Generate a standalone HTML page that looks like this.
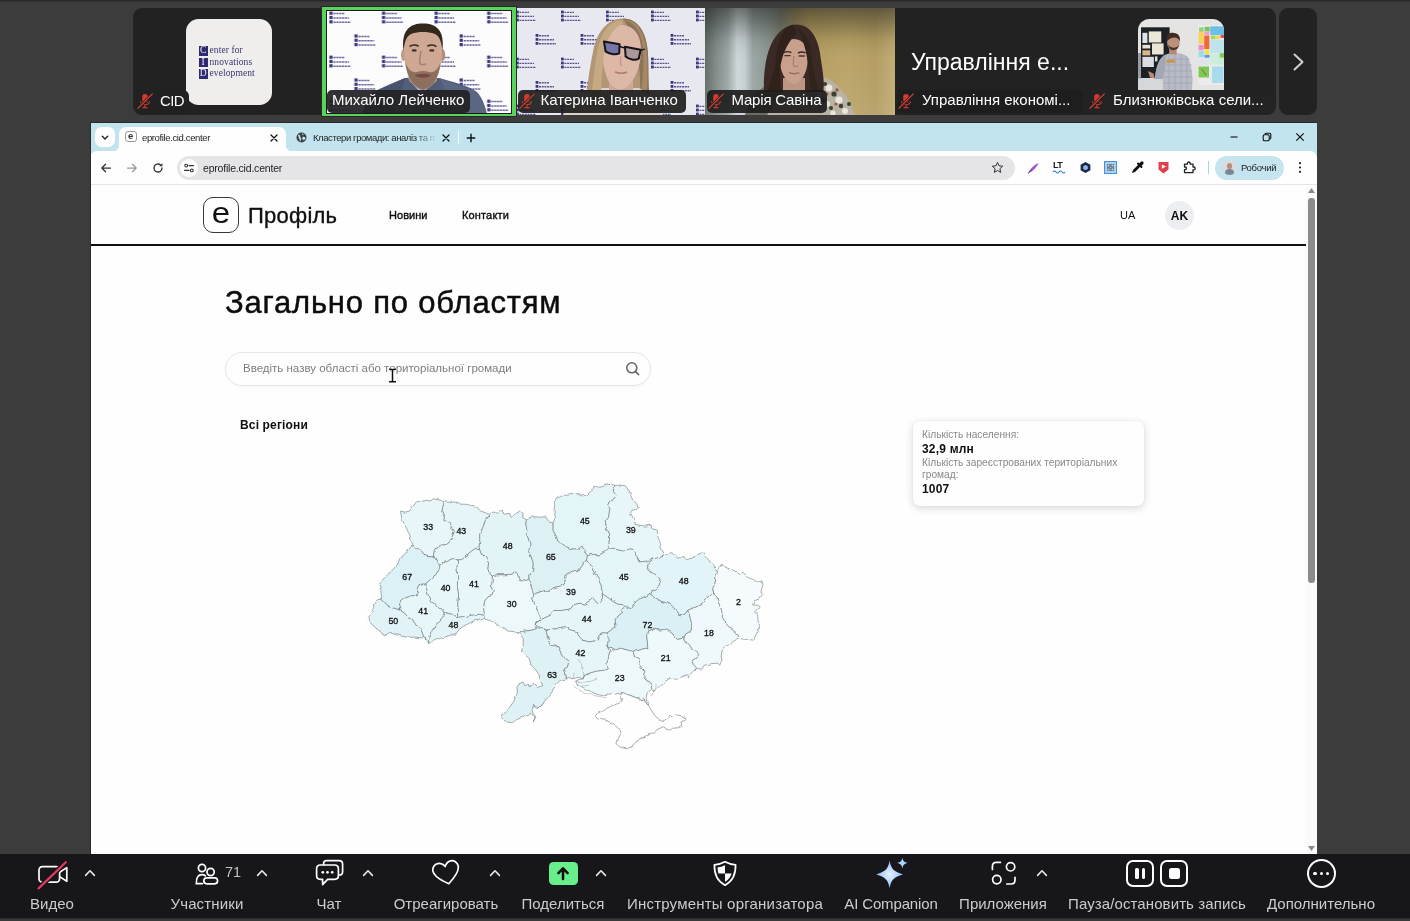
<!DOCTYPE html>
<html><head><meta charset="utf-8">
<style>
*{box-sizing:border-box;margin:0;padding:0}
html,body{width:1410px;height:921px;overflow:hidden}
body{background:#3c3c3c;font-family:"Liberation Sans",sans-serif;position:relative;color:#fff}
.abs{position:absolute}
#topline{left:0;top:0;width:1410px;height:2px;background:linear-gradient(#262626,#2e2e2e 55%,#3c3c3c)}
/* tiles */
.tile{position:absolute;top:8px;height:107px;background:#232323;overflow:hidden}
.lbl{position:absolute;left:2px;bottom:2px;height:21px;background:rgba(30,30,30,.92);border-radius:5px;color:#fff;font-size:15px;line-height:21px;padding:0 7px 0 25px;white-space:nowrap}
.lbl.nomic{padding-left:6px}
.lbl svg{position:absolute;left:1px;top:2px}
.cb{display:inline-block;width:9.5px;height:9.5px;line-height:9.5px;background:#2f2a72;color:#f0efed;font-weight:400;text-align:center;margin-right:1.5px;vertical-align:0}
/* browser */
#browser{left:90px;top:122px;width:1227px;height:732px;background:#fff;overflow:hidden;color:#000}
#tabstrip{left:0;top:0;width:1227px;height:40px;background:#c3e5f0}
#toolbar{left:0;top:29px;width:1227px;height:34px;background:#fff;border-bottom:1px solid #e6e6e6;border-radius:7px 7px 0 0}
#bleft{left:0;top:0;width:1px;height:732px;background:#2a2a2a;z-index:5}
#btop{left:0;top:0;width:1227px;height:1px;background:#2a2a2a;z-index:5}
#page{left:0;top:63px;width:1216px;height:669px;background:#fff}
/* bottom bar */
.bl{top:41px;text-align:center;font-size:15px;line-height:18px;color:#cdcdcd;white-space:nowrap}
#bbar{left:0;top:854px;width:1410px;height:67px;background:#18181c}
#bbar .it{position:absolute;top:0;height:67px;text-align:center;color:#d6d6d6;font-size:15px}
#bbar .it span{position:absolute;top:41px;left:50%;transform:translateX(-50%);white-space:nowrap;line-height:18px}
</style></head>
<body>
<div id="root" style="position:absolute;left:0;top:0;width:1410px;height:921px;will-change:transform;opacity:.9999">
<div id="topline" class="abs"></div>
<!-- TILES -->
<div id="tiles">
<svg width="0" height="0" style="position:absolute">
 <defs>
  <symbol id="mic" viewBox="0 0 16 16">
   <rect x="5.2" y="1" width="5.6" height="8.6" rx="2.8" fill="#d63a2f"/>
   <path d="M3.6 8.2 C3.9 13 12.1 13 12.4 8.2" stroke="#d63a2f" stroke-width="1.1" fill="none"/>
   <path d="M8 12 V14.4 M5.6 14.6 H10.4" stroke="#d63a2f" stroke-width="1.1" fill="none"/>
   <path d="M1 15.4 L15.4 0.8" stroke="#232323" stroke-width="2.6"/>
   <path d="M0.6 15.6 L15.6 0.6" stroke="#e0443a" stroke-width="1.1"/>
  </symbol>
  <pattern id="cidpat" width="52.6" height="44" patternUnits="userSpaceOnUse">
    <g fill="#2f2a72">
     <rect x="2.4" y="0.6" width="3.2" height="3.2"/><rect x="2.4" y="4.9" width="3.2" height="3.2"/><rect x="2.4" y="9.2" width="3.2" height="3.2"/>
     <rect x="27.4" y="23.4" width="3.2" height="3.2"/><rect x="27.4" y="27.7" width="3.2" height="3.2"/><rect x="27.4" y="32" width="3.2" height="3.2"/>
    </g>
    <g stroke="#56508f" stroke-width="1.5" stroke-dasharray="2.2 .7" fill="none">
     <path d="M6.4 2.6 H18 M6.4 6.9 H22 M6.4 11.2 H23.4"/>
     <path d="M31.4 25.4 H43 M31.4 29.7 H47 M31.4 34 H48.4"/>
    </g>
  </pattern>
  <pattern id="cidpat3" width="45" height="47" patternUnits="userSpaceOnUse">
    <g fill="#2f2a72">
     <rect x="-1" y="2.6" width="2.8" height="2.8"/><rect x="-1" y="6.6" width="2.8" height="2.8"/><rect x="-1" y="10.6" width="2.8" height="2.8"/>
     <rect x="44" y="2.6" width="2.8" height="2.8"/><rect x="44" y="6.6" width="2.8" height="2.8"/><rect x="44" y="10.6" width="2.8" height="2.8"/>
     <rect x="18.6" y="26" width="2.8" height="2.8"/><rect x="18.6" y="30" width="2.8" height="2.8"/><rect x="18.6" y="34" width="2.8" height="2.8"/>
    </g>
    <g stroke="#4d4788" stroke-width="1.4" stroke-dasharray="2 .7" fill="none">
     <path d="M2.4 4.4 H12 M2.4 8.4 H17 M2.4 12.4 H19"/>
     <path d="M22 27.8 H32 M22 31.8 H37 M22 35.8 H39"/>
    </g>
  </pattern>
  <filter id="bl1" x="-10%" y="-10%" width="120%" height="120%"><feGaussianBlur stdDeviation=".55"/></filter>
  <filter id="bl2" x="-10%" y="-10%" width="120%" height="120%"><feGaussianBlur stdDeviation="1.1"/></filter>
  <filter id="bl4" x="-10%" y="-10%" width="120%" height="120%"><feGaussianBlur stdDeviation="3.5"/></filter>
 </defs>
</svg>

<!-- tile 1 : CID -->
<div class="tile" style="left:133px;width:189px;border-radius:9px 0 0 9px">
  <div class="abs" style="left:52.5px;top:11px;width:86px;height:86px;border-radius:12.5px;background:#f0efed;letter-spacing:.1px;color:#3b3577;font-family:'Liberation Serif',serif;font-size:9.5px;line-height:11.7px">
    <div class="abs" style="left:13px;top:26px;white-space:nowrap">
      <div><b class="cb">C</b>enter for</div><div><b class="cb">I</b>nnovations</div><div><b class="cb">D</b>evelopment</div>
    </div>
  </div>
  <div class="lbl" style="left:3px;bottom:0;height:25px;line-height:21px;border-radius:6px;background:#222;letter-spacing:-.6px;padding:0 5px 0 24px"><svg width="16" height="16" style="top:3px"><use href="#mic"/></svg>CID</div>
</div>

<!-- tile 2 : active speaker -->
<div class="abs" style="left:321px;top:6px;width:196px;height:111px;background:#5bd45d;border:1px solid #2a2a2a"></div>
<div class="abs" style="left:326px;top:10px;width:186px;height:104px;background:#1c1c1c"></div>
<div class="abs" style="left:327px;top:11px;width:184px;height:102px;background:#fdfdfe;overflow:hidden">
  <svg width="184" height="102" viewBox="0 0 184 102" class="abs" style="left:0;top:0">
    <rect width="184" height="102" fill="#fdfdfe"/>
    <rect width="184" height="102" fill="url(#cidpat)" filter="url(#bl1)" opacity=".92"/>
    <g filter="url(#bl1)">
    <!-- jacket -->
    <path d="M44 82 C56 76 68 71 78 67 L112 67 C126 71 142 75 150 81 C156 88 158 96 160 104 L34 104 Z" fill="#525e7a"/>
    <path d="M78 67 L72 86 L60 104 L44 104 L50 80 Z" fill="#49546e"/>
    <path d="M112 67 L122 86 L134 104 L160 104 C158 94 154 84 148 80 Z" fill="#5b6783"/>
    <path d="M80 66 L95 84 L110 66 Z" fill="#9fb4dc"/>
    <!-- neck -->
    <path d="M82 56 H110 V70 L96 80 L82 70 Z" fill="#b18a77"/>
    <!-- ears -->
    <ellipse cx="76.6" cy="44" rx="2.6" ry="6" fill="#c49a86"/><ellipse cx="115.6" cy="44" rx="2.6" ry="6" fill="#b88d78"/>
    <!-- head -->
    <path d="M77 40 C76 22 84 15 96 15 C108 15 116 22 115 40 C115 56 110 70 104 75 C100 78.6 92 78.6 88 75 C82 70 77 56 77 40 Z" fill="#d0a995"/>
    <!-- hair -->
    <path d="M76.6 40 C74 20 82 12.4 96 12.4 C110 12.4 118 20 115.4 40 C114.6 30 112 25 108 23 C100 20.4 92 20.4 84 23 C80 25 77.4 30 76.6 40 Z" fill="#33291f"/>
    <!-- beard -->
    <path d="M78.6 52 C80 66 86 77 96 78.4 C106 77 112 66 113.4 52 C110 60 106 62 102 61 C98 59.6 94 59.6 90 61 C86 62 82 60 78.6 52 Z" fill="#8e6f5f"/>
    <path d="M88 64 C92 62.6 100 62.6 104 64 C102 67.6 90 67.6 88 64 Z" fill="#7a4a44"/>
    <!-- eyes/brows -->
    <path d="M82.6 35.6 C85 33.8 89 33.8 91.6 35.2 M100.4 35.2 C103 33.8 107 33.8 109.4 35.6" stroke="#3a2a20" stroke-width="1.7" fill="none"/>
    <ellipse cx="87.2" cy="39.4" rx="2.6" ry="1.2" fill="#3e2e28"/><ellipse cx="104.8" cy="39.4" rx="2.6" ry="1.2" fill="#3e2e28"/>
    <path d="M94 40 C93 46 92 50 93 52.6 C95 54 97 54 99 52.6" stroke="#a87f6c" stroke-width="1.4" fill="none"/>
    </g>
  </svg>
  <div class="lbl nomic" style="left:0px;bottom:0px;height:23px;line-height:20px;border-radius:5px;background:rgba(35,35,38,.93);padding:0 6px 0 5px">Михайло Лейченко</div>
</div>

<!-- tile 3 -->
<div class="tile" style="left:517px;width:188px;background:#e7e8f0">
  <svg width="188" height="107" viewBox="0 0 188 107" class="abs" style="left:0;top:0">
    <rect width="188" height="107" fill="#e8e9f1"/>
    <rect width="188" height="107" fill="url(#cidpat3)" filter="url(#bl1)" opacity=".92"/>
    <g filter="url(#bl1)">
    <!-- hair back -->
    <path d="M66 107 C70 84 72 62 76 44 C80 22 92 10.6 106 10.6 C122 10.6 130 26 131 46 C132 66 130 86 136 107 Z" fill="#b39877"/>
    <path d="M106 10.6 C122 10.6 130 26 131 46 C132 66 130 86 136 107 L122 107 C124 80 126 40 106 10.6 Z" fill="#8e7458"/>
    <!-- shoulders -->
    <path d="M46 107 C54 92 68 84 84 80 L122 80 C130 84 140 92 146 107 Z" fill="#ddd2cf"/>
    <!-- neck -->
    <path d="M92 70 H116 V84 H92 Z" fill="#cfa896"/>
    <!-- face -->
    <path d="M85 40 C84 24 94 17 104 17 C116 17 124 26 124 42 C124 58 118 74 108 80 C102 83 96 80 92 74 C88 66 85 54 85 40 Z" fill="#deb9a7"/>
    <!-- hair front -->
    <path d="M104 12 C92 14 84 24 80 44 C77 62 76 82 72 100 L84 92 C85 70 85 44 92 30 C96 22 100 18 106 16 Z" fill="#c6aa84"/>
    <path d="M104 12 C114 12 124 20 126 40 C127 56 126 72 124 84 L130 84 C131 60 132 30 120 17 C116 13 110 11 104 12 Z" fill="#a58a69"/>
    <!-- glasses -->
    <path d="M87 33.6 L102.6 36.2 L102.2 45.4 C98 47 92 46 88.6 43.4 Z" fill="#5a66a8" fill-opacity=".8" stroke="#15151a" stroke-width="2" stroke-linejoin="round"/>
    <path d="M108 38.8 L123.6 41.8 L121.8 50.6 C118 52.6 112 51.6 108.6 48.6 Z" fill="#9c8f98" fill-opacity=".75" stroke="#15151a" stroke-width="2" stroke-linejoin="round"/>
    <path d="M102.6 38.6 L108 40" stroke="#15151a" stroke-width="1.5"/>
    <path d="M123.6 42.4 L128 41" stroke="#15151a" stroke-width="1.3"/>
    <path d="M98 64 C102 65.4 107 65.4 110 64" stroke="#b07c72" stroke-width="1.6" fill="none"/>
    <path d="M104 48 C103 54 103 56 105 58" stroke="#c39a88" stroke-width="1.3" fill="none"/>
    </g>
  </svg>
  <div class="lbl" style="left:1px;bottom:2px;height:23px;line-height:20px;border-radius:5px;width:168px;padding-left:22.5px"><svg width="16" height="16" style="top:3px"><use href="#mic"/></svg>Катерина Іванченко</div>
</div>

<!-- tile 4 -->
<div class="tile" style="left:705px;width:190px;background:#a79a70">
  <svg width="190" height="107" viewBox="0 0 190 107" class="abs" style="left:0;top:0">
    <defs>
     <linearGradient id="t4h" x1="0" y1="0" x2="1" y2="0">
      <stop offset="0" stop-color="#5f6862"/><stop offset=".06" stop-color="#7f8a86"/><stop offset=".12" stop-color="#98a5a4"/><stop offset=".17" stop-color="#cdd6d8"/><stop offset=".21" stop-color="#c3cdd0"/><stop offset=".25" stop-color="#99a5a4"/><stop offset=".33" stop-color="#8b9690"/><stop offset=".4" stop-color="#7c8174"/><stop offset=".47" stop-color="#9a8b5c"/><stop offset=".55" stop-color="#b39b5e"/><stop offset=".75" stop-color="#b9a265"/><stop offset=".9" stop-color="#b29b60"/><stop offset="1" stop-color="#c0aa70"/>
     </linearGradient>
     <linearGradient id="t4v" x1="0" y1="0" x2="0" y2="1"><stop offset="0" stop-color="#1e201c" stop-opacity=".55"/><stop offset=".28" stop-color="#1e201c" stop-opacity=".1"/><stop offset=".5" stop-color="#fff" stop-opacity=".04"/><stop offset="1" stop-color="#fff" stop-opacity=".1"/></linearGradient>
    </defs>
    <rect width="190" height="107" fill="url(#t4h)"/>
    <rect width="190" height="107" fill="url(#t4v)"/>
    <g filter="url(#bl1)">
    <!-- blouse -->
    <path d="M40 107 C46 86 58 76 74 72 L116 68 C134 74 144 90 150 107 Z" fill="#b9b4a6"/>
    <path d="M40 107 C46 86 58 76 74 72 L80 82 L62 107Z" fill="#6f6e64"/>
    <g fill="#ece7dc"><circle cx="124" cy="80" r="3.4"/><circle cx="134" cy="92" r="3.6"/><circle cx="122" cy="96" r="3"/><circle cx="140" cy="103" r="3"/><circle cx="128" cy="105" r="2.6"/><circle cx="114" cy="86" r="2.4"/></g>
    <g fill="#3d4136"><circle cx="129" cy="86" r="2.6"/><circle cx="118" cy="92" r="2.4"/><circle cx="136" cy="98" r="2.2"/><circle cx="126" cy="100" r="2"/><circle cx="120" cy="76" r="2"/><circle cx="144" cy="96" r="2"/></g>
    <g fill="#a45a40"><circle cx="132" cy="82" r="1.8"/><circle cx="116" cy="98" r="1.8"/><circle cx="131" cy="96" r="1.6"/><circle cx="122" cy="86" r="1.5"/></g>
    <!-- hair -->
    <path d="M59 84 C58 52 65 24 86 17 C105 13 114 30 116 52 C118 66 120 76 118 84 Z" fill="#3a2c26"/>
    <!-- neck -->
    <path d="M78 70 H100 V86 H78 Z" fill="#bd9783"/>
    <!-- face -->
    <path d="M75 44 C77 28 98 26 102 42 C105 58 99 74 89 76.6 C79 74 73 60 75 44 Z" fill="#c9a18d"/>
    <path d="M88 16.6 C74 22 72 40 70 60 C66 72 64 78 62 84 L76 82 C73 64 75 42 92 25 Z" fill="#30241e"/>
    <path d="M92 20 C102 24 106 36 107 50 C108 62 110 74 116 84 L106 84 C104 70 104 40 92 20Z" fill="#33261f"/>
    <path d="M78.6 44.6 C81 43.4 84 43.4 86.4 44.6 M93 45 C95.4 43.8 98.4 43.8 100.6 45" stroke="#3a2a24" stroke-width="1.4" fill="none"/>
    <path d="M79.4 47.6 H85.6 M93.8 48 H99.8" stroke="#4a342c" stroke-width="1.3"/>
    <path d="M89 48 C88 54 87.6 56 89 58 C90.4 58.8 92 58.6 93 58" stroke="#a97f6c" stroke-width="1.2" fill="none"/>
    <path d="M84 64.6 C87 65.8 91.4 65.8 94.4 64.6" stroke="#9c6a60" stroke-width="1.5" fill="none"/>
    </g>
  </svg>
  <div class="lbl" style="left:2px;bottom:2px;height:23px;line-height:20px;border-radius:5px;letter-spacing:-.2px;padding:0 5.5px 0 24.5px"><svg width="16" height="16" style="top:3px"><use href="#mic"/></svg>Марія Савіна</div>
</div>

<!-- tile 5 -->
<div class="tile" style="left:895px;width:191px">
  <div class="abs" style="left:16px;top:39px;font-size:23px;line-height:30px;color:#fff;white-space:nowrap">Управління е...</div>
  <div class="lbl" style="left:2px;bottom:2px;height:23px;line-height:20px;border-radius:5px;background:#1f1f1f;width:186px"><svg width="16" height="16" style="top:3px"><use href="#mic"/></svg>Управління економі...</div>
</div>

<!-- tile 6 -->
<div class="tile" style="left:1086px;width:190px;border-radius:0 9px 9px 0">
  <svg width="86" height="72" viewBox="0 0 86 72" class="abs" style="left:52px;top:11px;border-radius:11.5px 11.5px 0 0">
    <rect width="86" height="72" fill="#e5e5e3"/>
    <g filter="url(#bl1)">
    <rect x="0" y="34" width="3.4" height="38" fill="#9a9fa4"/>
    <rect x="0" y="59.5" width="26" height="13" fill="#d6d8d9"/>
    <rect x="3" y="8.3" width="28.6" height="50.7" fill="#1e2126"/>
    <rect x="4.4" y="13.8" width="5" height="10.2" fill="#dfe3ea"/><rect x="10.8" y="12.4" width="12.5" height="11.1" fill="#ece8da"/>
    <rect x="4.4" y="25.8" width="7.8" height="3.7" fill="#e8e3d4"/><rect x="14" y="24.4" width="11.6" height="11.1" fill="#ebe6d6"/>
    <rect x="4.4" y="31.3" width="7.8" height="5.1" fill="#d8b988"/><rect x="4.4" y="37.8" width="11.5" height="10.2" fill="#dcdde3"/>
    <rect x="17" y="37.4" width="2.4" height="5" fill="#e6e6e6"/>
    <!-- notes -->
    <rect x="60.2" y="6" width="26" height="60" fill="#ececee"/>
    <rect x="61.1" y="8.3" width="4.6" height="4.6" fill="#9bd37a"/><rect x="66.6" y="7.8" width="5.1" height="4.6" fill="#7fc65a"/>
    <rect x="72.2" y="7.3" width="13.8" height="8.8" fill="#6cc0ea"/>
    <rect x="60.6" y="12.9" width="5.6" height="12" fill="#f3d560"/><rect x="66.4" y="12.6" width="5" height="4.4" fill="#f0a0c8"/>
    <rect x="66.2" y="17" width="5.2" height="13" fill="#ee6a3a"/>
    <rect x="72.9" y="16.6" width="4.5" height="3.7" fill="#a6d860"/><rect x="77.4" y="16.6" width="4.4" height="3.7" fill="#eed95a"/><rect x="82.6" y="16" width="3.4" height="3" fill="#e8553a"/>
    <rect x="72.2" y="20.7" width="13.8" height="13.4" fill="#bfe4ee"/>
    <rect x="60.6" y="25.8" width="5.1" height="5.5" fill="#ef8fc0"/><rect x="60.6" y="31.8" width="5.6" height="6.5" fill="#9edaea"/>
    <rect x="66.6" y="30.4" width="4.8" height="5.1" fill="#f4e04a"/><rect x="66.6" y="35.9" width="5" height="2.8" fill="#5a9be0"/>
    <rect x="72.2" y="34.6" width="13.8" height="11" fill="#cdeedd"/><rect x="81.8" y="34.1" width="4.2" height="4.6" fill="#86c95a"/>
    <rect x="60.2" y="39.2" width="11.5" height="7.3" fill="#e2e4ec"/>
    <rect x="60.6" y="47.5" width="10.4" height="11" fill="#7ecb52"/><path d="M63.6 50 L68 56" stroke="#b0563a" stroke-width="1"/>
    <rect x="74" y="47.5" width="11.4" height="16.5" fill="#a9dcee"/>
    <!-- man -->
    <path d="M16.8 60 C18 48 21 38 28 35.4 L36 33 L46 35.4 C52 38 53.6 48 54.6 60 L54 72 L25 72 L24.6 58 Z" fill="#b9bcc6"/>
    <path d="M16.8 60 C18 48 21 38 28 35.4 L27 50 L24.6 60 Z" fill="#a4a8b4"/>
    <path d="M30 40 h22 M28 46 h26 M26 52 h28 M25 58 h29 M25 64 h29 M31 36 v36 M37 34 v38 M43 35 v37 M49 37 v35" stroke="#8f94a6" stroke-width=".7" opacity=".6"/>
    <rect x="31.6" y="29" width="7" height="6.4" fill="#b58b74"/>
    <ellipse cx="35.4" cy="23.4" rx="6.3" ry="8.4" fill="#bd927b"/>
    <path d="M28.8 22 C27.8 14.6 32 13.6 36 13.9 C40.4 14.2 42.6 17.4 41.8 22.4 C40.4 18.2 35 16.6 28.8 22 Z" fill="#3f2e24"/>
    <path d="M30 25.4 C31 32.6 39.4 33.4 41 26 C39 29.4 33 29.8 30 25.4 Z" fill="#4a3428"/>
    <rect x="28.3" y="40.6" width="8.8" height="3.2" fill="#c99a4a"/>
    <path d="M9.9 52 l5.6 2.4 l1.3 5 l-4.8-1z" fill="#b98e78"/>
    </g>
  </svg>
  <div class="lbl" style="left:0px;bottom:0px;height:25px;line-height:20px;border-radius:5px;background:#242424;width:188px;padding-left:27px"><svg width="16" height="16" style="top:3px;left:3px"><use href="#mic"/></svg>Близнюківська сели...</div>
</div>

<!-- next arrow -->
<div class="tile" style="left:1279px;width:38px;border-radius:9px">
  <svg width="38" height="107" viewBox="0 0 38 107" class="abs" style="left:0;top:0"><path d="M15.5 46.5 L23.5 54 L15.5 61.5" stroke="#d2d2d2" stroke-width="2" fill="none" stroke-linecap="round" stroke-linejoin="round"/></svg>
</div>
</div>
<!-- BROWSER -->
<div id="browser" class="abs">
  <div id="tabstrip" class="abs">
<div class="abs" style="left:5px;top:5px;width:20px;height:20px;background:#fff;border-radius:6.5px"></div>
<svg class="abs" style="left:10px;top:12px" width="10" height="8" viewBox="0 0 10 8"><path d="M2.3 2.3 L5 5 L7.7 2.3" stroke="#222" stroke-width="1.4" fill="none" stroke-linecap="round" stroke-linejoin="round"/></svg>
<!-- active tab -->
<div class="abs" style="left:29px;top:5px;width:167px;height:24px;background:#fff;border-radius:7px 7px 0 0"></div>
<div class="abs" style="left:23px;top:23px;width:6px;height:6px;background:radial-gradient(circle at 0 0,transparent 6px,#fff 6.5px)"></div>
<div class="abs" style="left:196px;top:23px;width:6px;height:6px;background:radial-gradient(circle at 100% 0,transparent 6px,#fff 6.5px)"></div>
<div class="abs" style="left:35px;top:8.5px;width:11.5px;height:11.5px;border:1px solid #9a9a9a;border-radius:3px;background:#fff;font-size:9.5px;font-weight:700;line-height:8px;text-align:center;color:#333">e</div>
<div class="abs" style="left:52px;top:9px;font-size:9.5px;line-height:13px;letter-spacing:-.37px;color:#1f1f1f;white-space:nowrap">eprofile.cid.center</div>
<svg class="abs" style="left:180px;top:11.5px" width="8" height="8" viewBox="0 0 8 8"><path d="M1 1 L7 7 M7 1 L1 7" stroke="#111" stroke-width="1.3" stroke-linecap="round"/></svg>
<!-- tab 2 -->
<svg class="abs" style="left:206px;top:10px" width="11" height="11" viewBox="0 0 11 11"><circle cx="5.5" cy="5.5" r="5" fill="#3c4043"/><path d="M2 3.2 C3.5 2.6 4.4 3.6 4 4.6 C3.7 5.6 5 5.6 5 6.8 C5 7.8 4.2 8.2 4.2 9.4 M6.4 1.4 C6 2.6 7.2 3 7.8 2.6 M6.8 5.2 C7.8 4.8 9 5.4 9.4 6.2 C8.6 7.6 7.6 8.2 7 7.4 C6.6 6.8 6.2 5.8 6.8 5.2Z" fill="#c3e5f0" stroke="#c3e5f0" stroke-width=".5"/></svg>
<div class="abs" style="left:223px;top:9px;width:122px;overflow:hidden;font-size:9.5px;line-height:13px;letter-spacing:-.42px;color:#1f1f1f;white-space:nowrap">Кластери громади: аналіз та пі</div>
<div class="abs" style="left:325px;top:8px;width:22px;height:15px;background:linear-gradient(90deg,rgba(195,229,240,0),#c3e5f0)"></div>
<svg class="abs" style="left:351.5px;top:11.5px" width="8" height="8" viewBox="0 0 8 8"><path d="M1 1 L7 7 M7 1 L1 7" stroke="#111" stroke-width="1.3" stroke-linecap="round"/></svg>
<div class="abs" style="left:368px;top:9px;width:1px;height:13px;background:#f2fafc"></div>
<svg class="abs" style="left:376px;top:10.5px" width="10" height="10" viewBox="0 0 10 10"><path d="M5 1.2 V8.8 M1.2 5 H8.8" stroke="#111" stroke-width="1.4" stroke-linecap="round"/></svg>
<!-- window controls -->
<svg class="abs" style="left:1139px;top:10px" width="10" height="10" viewBox="0 0 10 10"><path d="M1.5 5 H8.5" stroke="#111" stroke-width="1.1"/></svg>
<svg class="abs" style="left:1172px;top:10px" width="10" height="10" viewBox="0 0 10 10"><rect x="1.2" y="2.8" width="6" height="6" rx="1.3" fill="none" stroke="#111" stroke-width="1.1"/><path d="M3 2.6 V2.2 Q3 1.2 4 1.2 H7.6 Q8.8 1.2 8.8 2.4 V6 Q8.8 7 7.8 7" fill="none" stroke="#111" stroke-width="1.1"/></svg>
<svg class="abs" style="left:1205px;top:10px" width="10" height="10" viewBox="0 0 10 10"><path d="M1.3 1.3 L8.7 8.7 M8.7 1.3 L1.3 8.7" stroke="#111" stroke-width="1.2"/></svg>
</div>
  <div id="toolbar" class="abs">
<svg class="abs" style="left:10px;top:11px" width="12" height="12" viewBox="0 0 12 12"><path d="M10.5 6 H1.8 M5.6 2.2 L1.8 6 L5.6 9.8" stroke="#333" stroke-width="1.25" fill="none" stroke-linecap="round" stroke-linejoin="round"/></svg>
<svg class="abs" style="left:36px;top:11px" width="12" height="12" viewBox="0 0 12 12"><path d="M1.5 6 H10.2 M6.4 2.2 L10.2 6 L6.4 9.8" stroke="#9a9a9a" stroke-width="1.25" fill="none" stroke-linecap="round" stroke-linejoin="round"/></svg>
<svg class="abs" style="left:62px;top:11px" width="12" height="12" viewBox="0 0 12 12"><path d="M10 6 A4 4 0 1 1 8.6 2.95" stroke="#333" stroke-width="1.3" fill="none" stroke-linecap="round"/><path d="M10.4 1 V4.2 H7.2 Z" fill="#333"/></svg>
<div class="abs" style="left:87px;top:5px;width:838px;height:24px;border-radius:12px;background:#e6e6e8"></div>
<div class="abs" style="left:90px;top:8px;width:18px;height:18px;border-radius:9px;background:#fff"></div>
<svg class="abs" style="left:93px;top:11px" width="12" height="12" viewBox="0 0 12 12"><circle cx="3.2" cy="3.6" r="1.4" fill="none" stroke="#333" stroke-width="1.1"/><path d="M6 3.6 H10.4" stroke="#333" stroke-width="1.2" stroke-linecap="round"/><circle cx="8.8" cy="8.4" r="1.4" fill="none" stroke="#333" stroke-width="1.1"/><path d="M1.6 8.4 H6" stroke="#333" stroke-width="1.2" stroke-linecap="round"/></svg>
<div class="abs" style="left:113px;top:10px;font-size:10.5px;line-height:14px;letter-spacing:-.2px;color:#1f1f1f;white-space:nowrap">eprofile.cid.center</div>
<svg class="abs" style="left:901px;top:10px" width="13" height="13" viewBox="0 0 13 13"><path d="M6.5 1.4 L8 4.8 L11.7 5.2 L8.9 7.7 L9.7 11.4 L6.5 9.5 L3.3 11.4 L4.1 7.7 L1.3 5.2 L5 4.8 Z" fill="none" stroke="#333" stroke-width="1" stroke-linejoin="round"/></svg>
<!-- extensions -->
<svg class="abs" style="left:936px;top:10px" width="14" height="14" viewBox="0 0 14 14"><path d="M2 12 C4 8 8 4 12.5 2 C11 6 7 10 3.5 11.6 Z" fill="#9b59d0"/><path d="M2 12.5 L6 9" stroke="#6b3fa0" stroke-width="1"/></svg>
<div class="abs" style="left:963px;top:9px;font-size:9px;font-weight:700;line-height:10px;color:#222;letter-spacing:-.5px">LT</div>
<svg class="abs" style="left:962px;top:19px" width="14" height="4" viewBox="0 0 14 4"><path d="M1 2 Q2.5 0 4 2 T7 2 T10 2 T13 2" stroke="#2a7de1" stroke-width="1.1" fill="none"/></svg>
<svg class="abs" style="left:989px;top:10px" width="13" height="13" viewBox="0 0 13 13"><path d="M6.5 1 L11.4 3.8 V9.2 L6.5 12 L1.6 9.2 V3.8 Z" fill="#1b2a4a"/><path d="M6.5 4 L8.8 5.3 V7.9 L6.5 9.2 L4.2 7.9 V5.3Z" fill="#8fb6e8"/></svg>
<div class="abs" style="left:1014px;top:10px;width:13px;height:13px;background:#a9d3f5;border:1.5px solid #4a90d9"></div>
<svg class="abs" style="left:1017px;top:13px" width="7" height="7" viewBox="0 0 7 7"><path d="M0 0h3v3h-3zM4 0h3v3h-3zM0 4h3v3h-3zM4 4h3v3h-3z" fill="none" stroke="#555" stroke-width=".8"/></svg>
<svg class="abs" style="left:1040px;top:9px" width="15" height="15" viewBox="0 0 15 15"><path d="M2 13 L3 10 L8.5 4.5 L10.5 6.5 L5 12 Z" fill="#111"/><path d="M8 3.5 L11.5 7" stroke="#111" stroke-width="2" stroke-linecap="round"/><path d="M10 5 L12 3" stroke="#111" stroke-width="3.2" stroke-linecap="round"/></svg>
<svg class="abs" style="left:1067px;top:10px" width="13" height="13" viewBox="0 0 13 13"><path d="M1.5 1 H11.5 V8.5 L6.5 12.5 L1.5 8.5 Z" fill="#e0414c"/><path d="M4.8 3.4 L9 5.6 L4.8 7.8 Z" fill="#fff"/></svg>
<svg class="abs" style="left:1092px;top:9px" width="15" height="15" viewBox="0 0 15 15"><path d="M2.5 4.2 H5.4 V3.4 A1.4 1.4 0 0 1 8.2 3.4 V4.2 H11 V7 H11.8 A1.4 1.4 0 0 1 11.8 9.8 H11 V12.6 H2.5 V9.6 H3.2 A1.3 1.3 0 0 0 3.2 7 H2.5 Z" fill="none" stroke="#222" stroke-width="1.3" stroke-linejoin="round"/></svg>
<div class="abs" style="left:1118px;top:10px;width:1px;height:13px;background:#a9d4e6"></div>
<div class="abs" style="left:1125px;top:5px;width:69px;height:24px;border-radius:12px;background:#c5e6f1"></div>
<div class="abs" style="left:1132px;top:9px;width:15px;height:15px;border-radius:8px;background:#d9dde2;overflow:hidden"><div class="abs" style="left:5px;top:3px;width:5px;height:6px;border-radius:3px;background:#b98f7c"></div><div class="abs" style="left:3px;top:9px;width:9px;height:8px;border-radius:4px 4px 0 0;background:#7d8792"></div></div>
<div class="abs" style="left:1151px;top:10px;font-size:9.5px;line-height:14px;letter-spacing:-.3px;color:#1f1f1f">Робочий</div>
<svg class="abs" style="left:1207px;top:10px" width="6" height="13" viewBox="0 0 6 13"><circle cx="3" cy="2.2" r="1.1" fill="#222"/><circle cx="3" cy="6.5" r="1.1" fill="#222"/><circle cx="3" cy="10.8" r="1.1" fill="#222"/></svg>
</div>
  <div id="bleft" class="abs"></div><div id="btop" class="abs"></div>
  <div id="page" class="abs">
<!-- header -->
<div class="abs" style="left:113px;top:12px;width:36px;height:36px;border:1px solid #3a3a3a;border-radius:10px"></div>
<div class="abs" style="left:113px;top:9.5px;width:36px;text-align:center;font-size:29px;line-height:36px;color:#111;transform:scaleX(1.14)">e</div>
<div class="abs" style="left:158px;top:18px;font-size:22px;line-height:26px;color:#111;white-space:nowrap;letter-spacing:.25px;-webkit-text-stroke:.35px #111">Профіль</div>
<div class="abs" style="left:299px;top:24px;font-size:11px;line-height:13px;color:#111;letter-spacing:.05px;-webkit-text-stroke:.4px #111">Новини</div>
<div class="abs" style="left:372px;top:24px;font-size:11px;line-height:13px;color:#111;letter-spacing:.15px;-webkit-text-stroke:.4px #111">Контакти</div>
<div class="abs" style="left:1030px;top:24px;font-size:11px;line-height:13px;color:#111">UA</div>
<div class="abs" style="left:1075px;top:16px;width:29px;height:29px;border-radius:15px;background:#eeeff3"></div>
<div class="abs" style="left:1075px;top:23.5px;width:29px;text-align:center;font-size:12px;line-height:14px;font-weight:700;color:#111;letter-spacing:.2px">AK</div>
<div class="abs" style="left:0;top:59px;width:1216px;height:2px;background:#111"></div>
<!-- heading -->
<div class="abs" style="left:135px;top:99px;font-size:31px;line-height:38px;letter-spacing:.8px;color:#0d0d0d;white-space:nowrap;-webkit-text-stroke:.45px #0d0d0d">Загально по областям</div>
<!-- search -->
<div class="abs" style="left:135px;top:166.5px;width:426px;height:34px;border:1px solid #e7e7e7;border-radius:17px;box-shadow:0 1px 3px rgba(0,0,0,.04)"></div>
<div class="abs" style="left:153px;top:176px;font-size:11.5px;line-height:14px;color:#7f7f7f;white-space:nowrap">Введіть назву області або територіальної громади</div>
<svg class="abs" style="left:535px;top:176px" width="15" height="15" viewBox="0 0 15 15"><circle cx="6.8" cy="6.8" r="5" fill="none" stroke="#6a6a6a" stroke-width="1.6"/><path d="M10.6 10.6 L13.6 13.6" stroke="#6a6a6a" stroke-width="1.6" stroke-linecap="round"/></svg>
<svg class="abs" style="left:297.5px;top:182.5px" width="9" height="15" viewBox="0 0 9 15"><path d="M1 1.2 H3 Q4.5 1.2 4.5 2.6 V12.4 Q4.5 13.8 3 13.8 H1 M8 1.2 H6 Q4.5 1.2 4.5 2.6 M4.5 12.4 Q4.5 13.8 6 13.8 H8" stroke="#fff" stroke-width="2.8" fill="none"/><path d="M1 1.2 H3 Q4.5 1.2 4.5 2.6 V12.4 Q4.5 13.8 3 13.8 H1 M8 1.2 H6 Q4.5 1.2 4.5 2.6 M4.5 12.4 Q4.5 13.8 6 13.8 H8" stroke="#111" stroke-width="1.5" fill="none"/></svg>
<div class="abs" style="left:150px;top:233px;font-size:12px;line-height:15px;font-weight:700;letter-spacing:.15px;color:#111">Всі регіони</div>
<!-- card -->
<div class="abs" style="left:823px;top:236px;width:231px;height:85px;border-radius:7px;background:#fff;box-shadow:0 2px 8px rgba(0,0,0,.16),0 0 2px rgba(0,0,0,.06)"></div>
<div class="abs" style="left:832px;top:243.7px;width:215px;font-size:10.2px;line-height:12px;color:#8a8a8a">Кількість населення:</div>
<div class="abs" style="left:832px;top:256.6px;font-size:12px;line-height:15px;font-weight:700;letter-spacing:.2px;color:#111">32,9 млн</div>
<div class="abs" style="left:832px;top:271.5px;width:215px;font-size:10.2px;line-height:12px;color:#8a8a8a">Кількість зареєстрованих територіальних громад:</div>
<div class="abs" style="left:832px;top:296.5px;font-size:12px;line-height:15px;font-weight:700;letter-spacing:.2px;color:#111">1007</div>
<svg class="abs" style="left:260px;top:285px" width="440" height="290" viewBox="0 0 1397 920.75">
<defs><filter id="wig" x="-2%" y="-2%" width="104%" height="104%"><feTurbulence type="fractalNoise" baseFrequency="0.045" numOctaves="2" seed="7" result="n"/><feDisplacementMap in="SourceGraphic" in2="n" scale="11" xChannelSelector="R" yChannelSelector="G"/></filter></defs>
<g stroke="#5e686a" stroke-width="1.9" stroke-linejoin="round" stroke-opacity=".9" filter="url(#wig)">
<path d="M195 242 L200 235 L188 220 L192 210 L185 198 L180 185 L172 172 L165 155 L160 131 L172 134 L188 131 L198 118 L210 102 L235 98 L265 92 L300 98 L300 98 L295 118 L292 132 L300 150 L298 160 L312 165 L325 185 L332 195 L325 210 L320 222 L310 235 L288 240 L275 245 L268 255 L265 272 L265 272 L248 272 L235 268 L225 255 L212 248 L200 240 L195 242Z" fill="#e9f7fa"/>
<path d="M300 98 L325 100 L345 108 L370 109 L400 116 L415 130 L430 136 L445 142 L445 142 L430 160 L425 175 L418 190 L412 205 L412 225 L410 242 L412 250 L412 250 L400 248 L385 258 L370 272 L355 285 L342 282 L342 282 L328 282 L310 290 L295 295 L285 302 L285 302 L278 295 L270 280 L265 272 L265 272 L268 255 L275 245 L288 240 L310 235 L320 222 L325 210 L332 195 L325 185 L312 165 L298 160 L300 150 L292 132 L295 118 L300 98Z" fill="#e6f6f9"/>
<path d="M98 408 L100 403 L98 383 L92 363 L108 348 L125 328 L145 306 L160 280 L178 262 L195 242 L195 242 L200 240 L212 248 L225 255 L235 268 L248 272 L265 272 L265 272 L270 280 L278 295 L285 302 L285 302 L285 311 L280 326 L265 338 L250 353 L238 363 L238 363 L230 361 L218 366 L212 381 L218 393 L205 398 L185 403 L165 411 L158 426 L158 445 L158 445 L150 443 L135 438 L120 431 L108 418 L98 408Z" fill="#ddf2f6"/>
<path d="M252 551 L240 541 L230 533 L210 531 L185 531 L165 528 L145 523 L125 516 L112 526 L105 521 L90 508 L75 496 L62 481 L60 466 L70 451 L75 436 L82 421 L88 408 L98 408 L98 408 L108 418 L120 431 L135 438 L150 443 L158 445 L158 445 L172 453 L185 468 L198 473 L205 486 L220 498 L228 511 L232 526 L240 541 L252 551Z" fill="#e2f4f8"/>
<path d="M238 363 L230 361 L218 366 L212 381 L218 393 L205 398 L185 403 L165 411 L158 426 L158 445 L158 445 L172 453 L185 468 L198 473 L205 486 L220 498 L228 511 L232 526 L240 541 L252 551 L252 551 L255 526 L260 511 L270 496 L282 481 L295 466 L300 452 L300 452 L292 441 L278 436 L272 428 L258 418 L250 403 L245 383 L238 363Z" fill="#e7f7fa"/>
<path d="M285 302 L285 311 L280 326 L265 338 L250 353 L238 363 L238 363 L245 383 L250 403 L258 418 L272 428 L278 436 L292 441 L300 452 L300 452 L315 456 L328 458 L332 463 L345 467 L345 467 L345 451 L342 426 L345 396 L341 366 L342 336 L340 311 L342 286 L342 282 L342 282 L328 282 L310 290 L295 295 L285 302Z" fill="#e8f7fa"/>
<path d="M428 461 L430 470 L415 476 L395 478 L380 486 L360 496 L345 508 L335 521 L315 526 L290 533 L270 541 L252 551 L252 551 L255 526 L260 511 L270 496 L282 481 L295 466 L300 452 L300 452 L315 456 L328 458 L332 463 L345 467 L345 467 L358 465 L368 471 L380 461 L395 460 L410 458 L428 461Z" fill="#e3f5f8"/>
<path d="M412 250 L400 248 L385 258 L370 272 L355 285 L342 282 L342 282 L342 286 L340 311 L342 336 L341 366 L345 396 L342 426 L345 451 L345 467 L345 467 L358 465 L368 471 L380 461 L395 460 L410 458 L428 461 L428 461 L424 436 L428 416 L438 403 L452 398 L455 383 L448 368 L452 353 L452 337 L452 338 L445 330 L438 315 L440 295 L432 280 L418 265 L412 250Z" fill="#e8f7fa"/>
<path d="M445 142 L455 132 L470 138 L480 128 L492 140 L505 138 L512 150 L525 140 L540 130 L550 138 L548 150 L560 158 L560 158 L558 175 L565 190 L562 210 L572 235 L568 260 L575 275 L582 295 L580 320 L572 332 L568 345 L568 345 L560 351 L538 348 L530 328 L522 323 L515 331 L490 333 L465 333 L452 337 L452 338 L445 330 L438 315 L440 295 L432 280 L418 265 L412 250 L412 250 L410 242 L412 225 L412 205 L418 190 L425 175 L430 160 L445 142Z" fill="#e4f5f8"/>
<path d="M452 337 L465 333 L490 333 L515 331 L522 323 L530 328 L538 348 L560 351 L568 345 L568 345 L575 368 L580 383 L584 395 L584 395 L580 411 L588 431 L598 451 L605 468 L602 478 L592 486 L590 496 L589 502 L589 502 L580 508 L560 511 L545 513 L534 518 L534 518 L520 513 L500 511 L488 503 L475 496 L460 486 L445 476 L430 470 L428 461 L428 461 L424 436 L428 416 L438 403 L452 398 L455 383 L448 368 L452 353 L452 337Z" fill="#edf9fb"/>
<path d="M560 158 L580 148 L605 150 L620 148 L632 165 L645 168 L645 168 L645 192 L655 210 L660 225 L675 235 L690 245 L698 252 L708 250 L726 250 L736 242 L748 250 L746 260 L754 272 L754 272 L751 287 L751 287 L745 291 L735 308 L722 323 L707 321 L687 331 L685 351 L672 368 L647 373 L632 386 L615 383 L587 393 L584 395 L580 383 L575 368 L568 345 L568 345 L572 332 L580 320 L582 295 L575 275 L568 260 L572 235 L562 210 L565 190 L558 175 L560 158Z" fill="#def2f6"/>
<path d="M645 168 L652 150 L648 130 L650 108 L660 90 L675 80 L698 75 L718 75 L736 82 L751 80 L768 65 L771 52 L794 55 L814 48 L831 45 L841 49 L841 49 L836 68 L846 80 L838 92 L824 100 L818 112 L824 130 L821 150 L814 160 L816 175 L811 190 L824 200 L824 220 L821 240 L818 252 L818 252 L806 262 L791 270 L774 268 L754 272 L754 272 L746 260 L748 250 L736 242 L726 250 L708 250 L698 252 L690 245 L675 235 L660 225 L655 210 L645 192 L645 168Z" fill="#e5f6f9"/>
<path d="M841 49 L858 48 L874 50 L886 65 L891 80 L898 95 L911 108 L914 120 L896 125 L891 138 L898 150 L904 162 L901 172 L918 175 L938 178 L956 175 L964 190 L976 198 L978 215 L986 230 L984 245 L991 260 L998 272 L998 272 L984 278 L964 282 L964 282 L938 290 L918 292 L908 272 L898 252 L878 250 L868 258 L844 252 L818 252 L818 252 L821 240 L824 220 L824 200 L811 190 L816 175 L814 160 L821 150 L824 130 L818 112 L824 100 L838 92 L846 80 L836 68 L841 49Z" fill="#e8f7fa"/>
<path d="M754 272 L774 268 L791 270 L806 262 L818 252 L818 252 L844 252 L868 258 L878 250 L898 252 L908 272 L918 292 L938 290 L964 282 L964 282 L948 295 L944 310 L954 322 L966 332 L978 342 L986 355 L981 370 L971 378 L956 385 L951 395 L951 393 L940 401 L920 408 L905 421 L892 440 L892 440 L885 436 L870 428 L850 426 L835 418 L820 406 L801 393 L801 393 L800 386 L797 366 L787 346 L775 326 L765 306 L751 287 L751 287 L754 272Z" fill="#e5f6f9"/>
<path d="M998 272 L1018 262 L1031 268 L1044 280 L1058 275 L1068 285 L1088 278 L1104 268 L1121 262 L1134 280 L1146 295 L1156 308 L1166 320 L1166 320 L1167 321 L1162 336 L1160 356 L1152 376 L1156 393 L1156 393 L1145 393 L1135 401 L1125 416 L1110 431 L1090 438 L1072 446 L1072 446 L1065 456 L1050 463 L1042 461 L1035 446 L1022 431 L1010 423 L990 418 L970 406 L951 393 L951 395 L956 385 L971 378 L981 370 L986 355 L978 342 L966 332 L954 322 L944 310 L948 295 L964 282 L964 282 L984 278 L998 272Z" fill="#e3f5f8"/>
<path d="M1166 320 L1174 302 L1191 308 L1206 315 L1224 320 L1238 330 L1248 325 L1264 340 L1284 350 L1298 358 L1308 352 L1311 365 L1306 380 L1311 395 L1298 410 L1284 415 L1278 428 L1298 430 L1306 435 L1294 442 L1284 450 L1294 460 L1296 480 L1301 493 L1296 510 L1288 525 L1281 540 L1258 538 L1234 535 L1234 535 L1231 520 L1221 513 L1208 503 L1194 488 L1186 475 L1182 466 L1180 446 L1172 426 L1165 408 L1156 393 L1156 393 L1152 376 L1160 356 L1162 336 L1167 321 L1166 320Z" fill="#f6fcfd"/>
<path d="M1234 535 L1218 543 L1208 553 L1191 560 L1181 575 L1178 590 L1181 603 L1174 620 L1168 613 L1148 615 L1128 620 L1114 635 L1098 633 L1094 635 L1094 635 L1096 636 L1100 628 L1090 618 L1085 606 L1097 598 L1107 586 L1100 578 L1085 566 L1070 551 L1060 534 L1060 534 L1065 521 L1082 511 L1085 496 L1080 471 L1077 458 L1072 446 L1072 446 L1090 438 L1110 431 L1125 416 L1135 401 L1145 393 L1156 393 L1156 393 L1165 408 L1172 426 L1180 446 L1182 466 L1186 475 L1194 488 L1208 503 L1221 513 L1231 520 L1234 535Z" fill="#f0fafc"/>
<path d="M587 393 L615 383 L632 386 L647 373 L672 368 L685 351 L687 331 L707 321 L722 323 L735 308 L745 291 L751 287 L751 287 L765 306 L775 326 L787 346 L797 366 L800 386 L801 393 L801 393 L802 411 L800 418 L785 423 L772 408 L760 416 L745 426 L730 423 L710 428 L700 441 L675 446 L647 446 L637 461 L622 468 L605 476 L590 486 L587 501 L589 502 L590 496 L592 486 L602 478 L605 468 L598 451 L588 431 L580 411 L584 395Z" fill="#e9f7fa"/>
<path d="M587 501 L590 486 L605 476 L622 468 L637 461 L647 446 L675 446 L700 441 L710 428 L730 423 L745 426 L760 416 L772 408 L785 423 L800 418 L802 411 L801 393 L801 393 L820 406 L835 418 L850 426 L870 428 L885 436 L892 440 L892 440 L872 436 L860 443 L865 453 L852 463 L842 478 L845 498 L830 508 L817 517 L817 517 L805 518 L790 526 L785 541 L760 546 L740 541 L730 531 L720 513 L700 508 L685 501 L665 503 L640 506 L622 508 L622 508 L605 503 L587 501Z" fill="#e6f6f9"/>
<path d="M892 440 L905 421 L920 408 L940 401 L951 393 L951 393 L970 406 L990 418 L1010 423 L1022 431 L1035 446 L1042 461 L1050 463 L1065 456 L1072 446 L1072 446 L1077 458 L1080 471 L1085 496 L1082 511 L1065 521 L1060 534 L1060 534 L1040 538 L1032 531 L1020 516 L1000 506 L985 508 L965 506 L945 511 L942 526 L944 546 L946 568 L940 566 L920 571 L901 576 L901 576 L885 573 L860 566 L840 571 L817 558 L817 558 L820 536 L817 517 L817 517 L830 508 L845 498 L842 478 L852 463 L865 453 L860 443 L872 436 L892 440Z" fill="#dcf1f5"/>
<path d="M901 576 L920 571 L940 566 L946 568 L944 546 L942 526 L945 511 L965 506 L985 508 L1000 506 L1020 516 L1032 531 L1040 538 L1060 534 L1060 534 L1070 551 L1085 566 L1100 578 L1107 586 L1097 598 L1085 606 L1090 618 L1100 628 L1096 636 L1094 635 L1094 635 L1078 650 L1074 660 L1068 650 L1048 658 L1038 665 L1018 660 L998 673 L984 685 L974 695 L964 703 L956 695 L956 695 L958 683 L954 675 L938 665 L931 655 L936 638 L924 625 L916 610 L918 598 L906 593 L901 576Z" fill="#eefafc"/>
<path d="M817 558 L840 571 L860 566 L885 573 L901 576 L901 576 L906 593 L918 598 L916 610 L924 625 L936 638 L931 655 L938 665 L954 675 L958 683 L956 695 L956 695 L944 705 L941 720 L946 735 L948 748 L948 748 L944 745 L934 730 L924 733 L908 723 L888 715 L868 708 L858 705 L860 706 L840 713 L820 711 L800 716 L780 711 L760 701 L740 691 L725 681 L715 671 L725 666 L740 663 L740 663 L745 651 L765 643 L785 638 L805 636 L817 631 L812 616 L820 598 L825 576 L817 558Z" fill="#eef9fb"/>
<path d="M622 508 L640 506 L665 503 L685 501 L700 508 L720 513 L730 531 L740 541 L760 546 L785 541 L790 526 L805 518 L817 517 L817 517 L820 536 L817 558 L817 558 L825 576 L820 598 L812 616 L817 631 L805 636 L785 638 L765 643 L745 651 L740 663 L740 663 L725 658 L715 661 L705 663 L687 663 L687 663 L685 651 L680 631 L690 626 L695 606 L680 596 L670 581 L660 561 L635 556 L627 531 L622 508Z" fill="#e6f6f9"/>
<path d="M587 501 L605 503 L622 508 L622 508 L627 531 L635 556 L660 561 L670 581 L680 596 L695 606 L690 626 L680 631 L685 651 L687 663 L687 663 L680 665 L665 670 L655 680 L645 700 L630 720 L615 738 L595 758 L582 748 L578 760 L580 770 L590 785 L582 803 L588 790 L582 780 L575 773 L555 780 L540 788 L525 795 L515 803 L500 800 L488 790 L480 778 L495 770 L500 760 L510 748 L520 735 L525 720 L532 705 L530 690 L538 678 L550 673 L555 685 L565 680 L575 685 L585 680 L595 690 L612 685 L605 670 L600 650 L590 635 L575 620 L570 600 L560 590 L545 575 L550 555 L550 535 L535 518 L534 518 L545 513 L560 511 L580 508 L589 502Z" fill="#dff3f7"/>
<path d="M948 748 L958 765 L971 783 L984 793 L998 795 L1011 785 L1014 778 L1024 785 L1038 778 L1054 780 L1066 785 L1066 793 L1054 800 L1056 810 L1044 818 L1024 820 L1014 828 L994 815 L978 823 L964 833 L938 845 L918 855 L904 868 L891 880 L878 885 L858 880 L844 868 L851 855 L858 840 L854 820 L838 810 L824 800 L806 790 L788 793 L778 785 L784 773 L798 765 L818 755 L834 748 L848 740 L864 733 L858 720 L858 705 L858 705 L868 708 L888 715 L908 723 L924 733 L934 730 L944 745 L948 748Z" fill="#ffffff"/>
</g>
<g stroke="#667072" stroke-width="1.4" fill="none" stroke-opacity=".8" filter="url(#wig)">
<path d="M971 678 L972 690 L964 705 L954 718"/>
<path d="M725 601 L732 611 L740 631 L742 651 L740 663"/>
<path d="M712 643 L710 656 L705 663"/>
<path d="M710 686 L730 701 L755 711 L785 718 L815 723"/>
<path d="M717 671 L740 673 L765 671 L785 663"/>
<path d="M720 678 L740 686 L760 683"/>
<path d="M582 748 L598 755 L612 738"/>
</g>
<g font-family="Liberation Sans, sans-serif" font-size="28" fill="#111" text-anchor="middle" stroke="#111" stroke-width="1">
<text x="248.5" y="191">33</text>
<text x="353.5" y="204">43</text>
<text x="500.5" y="251">48</text>
<text x="637.5" y="286">65</text>
<text x="745.5" y="171">45</text>
<text x="891.5" y="199">39</text>
<text x="181.5" y="349">67</text>
<text x="303.5" y="383">40</text>
<text x="393.5" y="373">41</text>
<text x="513.5" y="436">30</text>
<text x="701.5" y="396">39</text>
<text x="869.5" y="348">45</text>
<text x="1059.5" y="361">48</text>
<text x="1233.5" y="429">2</text>
<text x="137.5" y="489">50</text>
<text x="232.5" y="458">41</text>
<text x="328.5" y="503">48</text>
<text x="751.5" y="482">44</text>
<text x="944.5" y="501">72</text>
<text x="1139.5" y="526">18</text>
<text x="731.5" y="589">42</text>
<text x="1002.5" y="608">21</text>
<text x="641.5" y="661">63</text>
<text x="856.5" y="669">23</text>
</g></svg></div>
<div class="abs" style="left:1216px;top:63px;width:11px;height:669px;background:#fbfbfb"></div>
<svg class="abs" style="left:1217px;top:64px" width="9" height="9" viewBox="0 0 9 9"><path d="M4.5 2 L8 7 H1 Z" fill="#8b8b8b"/></svg>
<div class="abs" style="left:1218.3px;top:76px;width:6.6px;height:384.5px;border-radius:3.3px;background:#8d8d8f"></div>
<svg class="abs" style="left:1217px;top:722px" width="9" height="9" viewBox="0 0 9 9"><path d="M4.5 7 L8 2 H1 Z" fill="#8b8b8b"/></svg>

</div>
<!-- BOTTOM -->
<div id="bbar" class="abs">
<div class="abs" style="left:0;top:64px;width:1410px;height:3px;background:linear-gradient(#222224,#3a3a3a 40%)"></div>
<!-- video -->
<svg class="abs" style="left:34px;top:4px" width="38" height="32" viewBox="0 0 38 32"><rect x="5" y="8.6" width="20.6" height="15.6" rx="3.4" fill="none" stroke="#fff" stroke-width="1.7"/><path d="M25.6 14.2 L32.8 9.6 V23.2 L25.6 18.6" fill="none" stroke="#fff" stroke-width="1.7" stroke-linejoin="round"/><path d="M4.6 30.4 L31.8 4.2" stroke="#18181c" stroke-width="5"/><path d="M4.6 30.4 L31.8 4.2" stroke="#e8395f" stroke-width="2.2" stroke-linecap="round"/></svg>
<svg class="abs" style="left:84px;top:14px" width="12" height="10" viewBox="0 0 12 10"><path d="M1.6 7.4 L6 2.8 L10.4 7.4" stroke="#e8e8e8" stroke-width="1.6" fill="none" stroke-linecap="round" stroke-linejoin="round"/></svg><div class="abs bl" style="left:-68px;width:240px">Видео</div>
<!-- participants -->
<svg class="abs" style="left:194px;top:8px" width="28" height="24" viewBox="0 0 28 24"><circle cx="8" cy="6" r="3.6" fill="none" stroke="#fff" stroke-width="1.7"/><path d="M2.4 21.6 C2 15 4.6 12.6 8 12.6 C9.4 12.6 10.6 13 11.4 13.8" fill="none" stroke="#fff" stroke-width="1.7" stroke-linecap="round"/><path d="M2.4 21.6 H8.4" stroke="#fff" stroke-width="1.7" stroke-linecap="round"/><circle cx="16.6" cy="10" r="3.6" fill="none" stroke="#fff" stroke-width="1.7"/><rect x="9.8" y="15.8" width="13.8" height="6" rx="3" fill="none" stroke="#fff" stroke-width="1.7"/></svg>
<div class="abs" style="left:225px;top:10px;font-size:14.5px;line-height:17px;color:#c4c4c4">71</div>
<svg class="abs" style="left:256px;top:14px" width="12" height="10" viewBox="0 0 12 10"><path d="M1.6 7.4 L6 2.8 L10.4 7.4" stroke="#e8e8e8" stroke-width="1.6" fill="none" stroke-linecap="round" stroke-linejoin="round"/></svg><div class="abs bl" style="left:87px;width:240px;letter-spacing:.15px">Участники</div>
<!-- chat -->
<svg class="abs" style="left:314px;top:4px" width="32" height="30" viewBox="0 0 32 30"><path d="M9.6 6.4 V5.6 Q9.6 2.6 12.6 2.6 H25 Q28.6 2.6 28.6 6.2 V13.4 Q28.6 17 25.4 17" fill="none" stroke="#fff" stroke-width="1.7" stroke-linecap="round"/><path d="M6.4 7 H20.6 Q24.4 7 24.4 10.8 V17.6 Q24.4 21.4 20.6 21.4 H13.6 L8.6 26.6 V21.4 H6.4 Q2.6 21.4 2.6 17.6 V10.8 Q2.6 7 6.4 7 Z" fill="#18181c" stroke="#fff" stroke-width="1.7" stroke-linejoin="round"/><circle cx="8.8" cy="14.3" r="1.35" fill="#fff"/><circle cx="13.5" cy="14.3" r="1.35" fill="#fff"/><circle cx="18.2" cy="14.3" r="1.35" fill="#fff"/></svg>
<svg class="abs" style="left:362px;top:14px" width="12" height="10" viewBox="0 0 12 10"><path d="M1.6 7.4 L6 2.8 L10.4 7.4" stroke="#e8e8e8" stroke-width="1.6" fill="none" stroke-linecap="round" stroke-linejoin="round"/></svg><div class="abs bl" style="left:209px;width:240px">Чат</div>
<!-- react -->
<svg class="abs" style="left:430px;top:4px" width="33" height="30" viewBox="0 0 33 30"><g transform="rotate(-12 16.5 15)"><path d="M16.5 26 C9 20.6 3.6 16 3.6 10.6 C3.6 6.6 6.6 4 9.8 4 C12.6 4 15 5.6 16.5 8.4 C18 5.6 20.4 4 23.2 4 C26.4 4 29.4 6.6 29.4 10.6 C29.4 16 24 20.6 16.5 26 Z" fill="none" stroke="#fff" stroke-width="1.7" stroke-linejoin="round"/></g></svg>
<svg class="abs" style="left:489px;top:14px" width="12" height="10" viewBox="0 0 12 10"><path d="M1.6 7.4 L6 2.8 L10.4 7.4" stroke="#e8e8e8" stroke-width="1.6" fill="none" stroke-linecap="round" stroke-linejoin="round"/></svg><div class="abs bl" style="left:326px;width:240px">Отреагировать</div>
<!-- share -->
<div class="abs" style="left:549px;top:7.5px;width:28.5px;height:23px;border-radius:4.5px;background:#69ef8b"></div>
<svg class="abs" style="left:555px;top:11px" width="16" height="16" viewBox="0 0 16 16"><path d="M8 14 V4.4 M3.4 8.2 L8 3.4 L12.6 8.2" stroke="#0e0e10" stroke-width="2.5" fill="none" stroke-linecap="round" stroke-linejoin="round"/></svg>
<svg class="abs" style="left:595px;top:14px" width="12" height="10" viewBox="0 0 12 10"><path d="M1.6 7.4 L6 2.8 L10.4 7.4" stroke="#e8e8e8" stroke-width="1.6" fill="none" stroke-linecap="round" stroke-linejoin="round"/></svg><div class="abs bl" style="left:443px;width:240px">Поделиться</div>
<!-- host tools -->
<svg class="abs" style="left:712px;top:6px" width="26" height="27" viewBox="0 0 26 27"><path d="M13 1.8 C16.6 3.8 20.2 4.6 23.6 4.8 C23.8 14.4 20.6 21.4 13 25.2 C5.4 21.4 2.2 14.4 2.4 4.8 C5.8 4.6 9.4 3.8 13 1.8 Z" fill="none" stroke="#fff" stroke-width="1.7" stroke-linejoin="round"/><path d="M13 5.2 C10.6 6.4 8.2 7 5.6 7.4 C5.6 9.6 5.8 11.6 6.4 13.4 H13 Z" fill="#fff"/><path d="M13 13.4 H19.6 C18.6 17 16.4 19.8 13 21.8 Z" fill="#fff"/></svg>
<div class="abs bl" style="left:605px;width:240px;letter-spacing:.2px">Инструменты организатора</div>
<!-- AI companion -->
<svg class="abs" style="left:874px;top:2px" width="36" height="34" viewBox="0 0 36 34"><defs><radialGradient id="aig" cx=".5" cy=".5" r=".6"><stop offset="0" stop-color="#e6f1ff"/><stop offset=".45" stop-color="#b9d6fb"/><stop offset="1" stop-color="#5fa8f5"/></radialGradient></defs><path d="M15.6 4.6 C17 13 20 16 29 18.4 C20 20.8 17 23.8 15.6 32.2 C14.2 23.8 11.2 20.8 2.2 18.4 C11.2 16 14.2 13 15.6 4.6 Z" fill="url(#aig)"/><path d="M28.4 1.6 C29 5 30 6.2 33.6 7 C30 7.8 29 9 28.4 12.4 C27.8 9 26.8 7.8 23.2 7 C26.8 6.2 27.8 5 28.4 1.6 Z" fill="#a9d6ff"/></svg>
<div class="abs bl" style="left:771px;width:240px;letter-spacing:-.15px">AI Companion</div>
<!-- apps -->
<svg class="abs" style="left:990px;top:6px" width="28" height="27" viewBox="0 0 28 27"><path d="M2.4 9.4 V6.4 Q2.4 2.4 6.4 2.4 H10.4" fill="none" stroke="#fff" stroke-width="1.7" stroke-linecap="round"/><circle cx="20.6" cy="6.8" r="4.2" fill="none" stroke="#fff" stroke-width="1.7"/><circle cx="6.8" cy="19.6" r="4.2" fill="none" stroke="#fff" stroke-width="1.7"/><path d="M25 17.4 V20 Q25 24 21 24 H16.8" fill="none" stroke="#fff" stroke-width="1.7" stroke-linecap="round"/></svg>
<svg class="abs" style="left:1036px;top:14px" width="12" height="10" viewBox="0 0 12 10"><path d="M1.6 7.4 L6 2.8 L10.4 7.4" stroke="#e8e8e8" stroke-width="1.6" fill="none" stroke-linecap="round" stroke-linejoin="round"/></svg><div class="abs bl" style="left:883px;width:240px">Приложения</div>
<!-- record -->
<div class="abs" style="left:1126px;top:5.5px;width:28px;height:27.5px;border:2px solid #fff;border-radius:7px"></div>
<div class="abs" style="left:1135px;top:13.5px;width:3.6px;height:11px;border-radius:1.5px;background:#fff"></div>
<div class="abs" style="left:1141.6px;top:13.5px;width:3.6px;height:11px;border-radius:1.5px;background:#fff"></div>
<div class="abs" style="left:1160px;top:5.5px;width:28px;height:27.5px;border:2px solid #fff;border-radius:7px"></div>
<div class="abs" style="left:1168.5px;top:13.5px;width:11px;height:11px;border-radius:2.5px;background:#fff"></div>
<div class="abs bl" style="left:1037px;width:240px;letter-spacing:.1px">Пауза/остановить запись</div>
<!-- more -->
<div class="abs" style="left:1307px;top:5px;width:28.5px;height:28.5px;border:2px solid #fff;border-radius:15px"></div>
<div class="abs" style="left:1313.3999999999999px;top:17.6px;width:3.3px;height:3.3px;border-radius:2px;background:#fff"></div>
<div class="abs" style="left:1319.6px;top:17.6px;width:3.3px;height:3.3px;border-radius:2px;background:#fff"></div>
<div class="abs" style="left:1325.8px;top:17.6px;width:3.3px;height:3.3px;border-radius:2px;background:#fff"></div>
<div class="abs bl" style="left:1201px;width:240px">Дополнительно</div></div>
</div>
</body></html>
